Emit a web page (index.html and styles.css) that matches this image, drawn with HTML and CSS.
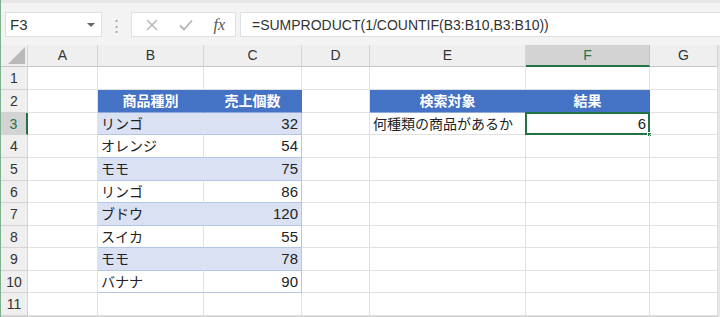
FILE: index.html
```html
<!DOCTYPE html>
<html>
  <head>
    <title>Book1 - Excel</title>
    <link rel="stylesheet" href="styles.css">
  </head>
  <body>
    <div class="formula-bar">
      <div class="name-box">
        <span>F3</span>
        <span class="name-arrow"></span>
      </div>
      <div class="grip">⋮</div>
      <div class="edit-buttons">
        <svg width="12" height="12" viewBox="0 0 12 12"><path d="M1 1L11 11M11 1L1 11" stroke="#b3b3b3" stroke-width="1.4" fill="none"/></svg>
        <svg width="14" height="12" viewBox="0 0 14 12"><path d="M1 6.5L5 10.5L13 1.5" stroke="#b3b3b3" stroke-width="1.8" fill="none"/></svg>
        <span class="fx">fx</span>
      </div>
      <div class="formula-input">=SUMPRODUCT(1/COUNTIF(B3:B10,B3:B10))</div>
    </div>

    <div class="sheet">
      <div class="corner"><span class="corner-tri"></span></div>
      <div class="col-head">A</div>
      <div class="col-head">B</div>
      <div class="col-head">C</div>
      <div class="col-head">D</div>
      <div class="col-head">E</div>
      <div class="col-head active">F</div>
      <div class="col-head">G</div>

      <div class="row-head">1</div>
      <div class="cell"></div><div class="cell"></div><div class="cell"></div><div class="cell"></div><div class="cell"></div><div class="cell"></div><div class="cell"></div>

      <div class="row-head">2</div>
      <div class="cell"></div>
      <div class="cell th">商品種別</div>
      <div class="cell th">売上個数</div>
      <div class="cell"></div>
      <div class="cell th">検索対象</div>
      <div class="cell th">結果</div>
      <div class="cell"></div>

      <div class="row-head active">3</div>
      <div class="cell"></div>
      <div class="cell band">リンゴ</div>
      <div class="cell band num">32</div>
      <div class="cell"></div>
      <div class="cell">何種類の商品があるか</div>
      <div class="cell num selected">6<span class="handle"></span></div>
      <div class="cell"></div>

      <div class="row-head">4</div>
      <div class="cell"></div>
      <div class="cell plain">オレンジ</div>
      <div class="cell plain num">54</div>
      <div class="cell"></div><div class="cell"></div><div class="cell"></div><div class="cell"></div>

      <div class="row-head">5</div>
      <div class="cell"></div>
      <div class="cell band">モモ</div>
      <div class="cell band num">75</div>
      <div class="cell"></div><div class="cell"></div><div class="cell"></div><div class="cell"></div>

      <div class="row-head">6</div>
      <div class="cell"></div>
      <div class="cell plain">リンゴ</div>
      <div class="cell plain num">86</div>
      <div class="cell"></div><div class="cell"></div><div class="cell"></div><div class="cell"></div>

      <div class="row-head">7</div>
      <div class="cell"></div>
      <div class="cell band">ブドウ</div>
      <div class="cell band num">120</div>
      <div class="cell"></div><div class="cell"></div><div class="cell"></div><div class="cell"></div>

      <div class="row-head">8</div>
      <div class="cell"></div>
      <div class="cell plain">スイカ</div>
      <div class="cell plain num">55</div>
      <div class="cell"></div><div class="cell"></div><div class="cell"></div><div class="cell"></div>

      <div class="row-head">9</div>
      <div class="cell"></div>
      <div class="cell band">モモ</div>
      <div class="cell band num">78</div>
      <div class="cell"></div><div class="cell"></div><div class="cell"></div><div class="cell"></div>

      <div class="row-head">10</div>
      <div class="cell"></div>
      <div class="cell plain">バナナ</div>
      <div class="cell plain num">90</div>
      <div class="cell"></div><div class="cell"></div><div class="cell"></div><div class="cell"></div>

      <div class="row-head">11</div>
      <div class="cell"></div><div class="cell"></div><div class="cell"></div><div class="cell"></div><div class="cell"></div><div class="cell"></div><div class="cell"></div>
    </div>
  </body>
</html>
```

FILE: styles.css
```css
* {
  box-sizing: border-box;
}
body {
  margin: 0;
  width: 720px;
  height: 317px;
  overflow: hidden;
  background: #e6e6e6;
  border-left: 1px solid #7fb08e;
  font-family: "Noto Sans CJK JP", "Noto Sans", sans-serif;
  font-size: 14px;
  color: #222;
}
.formula-bar {
  height: 45px;
  background: #f3f3f3;
  border-top: 3px solid #e6e6e6;
  display: flex;
  align-items: center;
  padding-left: 4px;
  padding-top: 1px;
}
.name-box {
  width: 97px;
  height: 25px;
  background: #fff;
  border: 1px solid #e0e0e0;
  display: flex;
  align-items: center;
  justify-content: space-between;
  padding: 0 6px 0 4px;
  font-family: "Liberation Sans", sans-serif;
  font-size: 15px;
  color: #333;
}
.name-arrow {
  width: 0;
  height: 0;
  border-left: 4px solid transparent;
  border-right: 4px solid transparent;
  border-top: 4px solid #666;
}
.grip {
  width: 29px;
  text-align: center;
  color: #a0a0a0;
  font-size: 15px;
}
.edit-buttons {
  width: 105px;
  height: 25px;
  background: #fff;
  border: 1px solid #e0e0e0;
  display: flex;
  align-items: center;
  justify-content: space-between;
  padding: 0 10px 0 14px;
}
.fx {
  font-family: "Liberation Serif", serif;
  font-style: italic;
  font-size: 16px;
  color: #555;
}
.formula-input {
  flex: 1;
  height: 25px;
  margin-left: 4px;
  background: #fff;
  border: 1px solid #e0e0e0;
  border-right: none;
  padding-left: 11px;
  display: flex;
  align-items: center;
  font-family: "Liberation Sans", sans-serif;
  font-size: 14px;
  color: #333;
}
.sheet {
  display: grid;
  grid-template-columns: 27px 70px 106px 98px 68px 156px 124px 68px;
  grid-template-rows: 22px 23px 23px 22px 23px 23px 22px 23px 22px 23px 22px 23px;
  background: #fff;
  width: 717px;
  border-bottom: 1px solid #d0d0d0;
}
.corner {
  background: #efefef;
  border-right: 1px solid #d4d4d4;
  border-bottom: 1px solid #c6c6c6;
  position: relative;
}
.corner-tri {
  position: absolute;
  right: 2px;
  bottom: 2px;
  width: 0;
  height: 0;
  border-left: 17px solid transparent;
  border-bottom: 17px solid #b9b9b9;
}
.col-head {
  background: #efefef;
  border-right: 1px solid #d4d4d4;
  border-bottom: 1px solid #c6c6c6;
  text-align: center;
  line-height: 21px;
  font-family: "Liberation Sans", sans-serif;
  font-size: 14px;
  color: #333;
}
.col-head.active {
  background: #d3d3d3;
  color: #217346;
  border-bottom: 2px solid #217346;
  border-right-color: #c0c0c0;
}
.row-head {
  background: #efefef;
  border-right: 1px solid #d4d4d4;
  border-bottom: 1px solid #d4d4d4;
  text-align: center;
  line-height: 22px;
  font-family: "Liberation Sans", sans-serif;
  font-size: 14px;
  color: #333;
}
.row-head.active {
  background: #d3d3d3;
  color: #217346;
  border-right: 2px solid #217346;
}
.cell {
  border-right: 1px solid #e1e1e1;
  border-bottom: 1px solid #e1e1e1;
  padding: 0 3px;
  line-height: 21px;
  white-space: nowrap;
  position: relative;
}
.num {
  text-align: right;
  font-family: "Liberation Sans", sans-serif;
  font-size: 15px;
}
.th {
  background: #4472c4;
  color: #fff;
  font-weight: bold;
  text-align: center;
  border-right-color: #4472c4;
  border-bottom-color: #8ea9db;
}
.band {
  background: #d9e1f2;
  border-right-color: #d9e1f2;
  border-bottom-color: #b4c6e7;
}
.band.num,
.plain.num {
  border-right-color: #b4c6e7;
}
.plain {
  border-bottom-color: #b4c6e7;
}
.selected {
  border: 2px solid #217346;
  margin: -1px 0 0 -1px;
  line-height: 19px;
  padding-right: 2px;
}
.handle {
  position: absolute;
  right: -4px;
  bottom: -4px;
  width: 5px;
  height: 5px;
  background: #217346;
  border: 1px solid #fff;
}
```
